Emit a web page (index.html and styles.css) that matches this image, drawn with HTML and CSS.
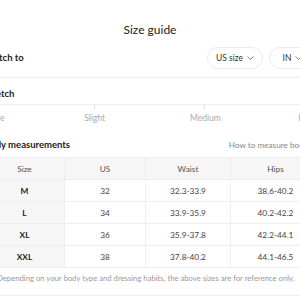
FILE: index.html
```html
<!DOCTYPE html>
<html lang="en">
<head>
    <meta charset="UTF-8">
    <meta name="viewport" content="width=device-width, initial-scale=1.0">
    <title>Size guide</title>
    <link rel="stylesheet" href="styles.css">
</head>
<body>
    <div class="modal">
        <h1 class="title">Size guide</h1>

        <div class="switch-row">
            <span class="section-label">Switch to</span>
            <div class="pills">
                <button class="pill">US size <span class="chev"><svg width="7" height="4" viewBox="0 0 7 4"><path d="M0.5 0.5 L3.5 3.3 L6.5 0.5" fill="none" stroke="#777" stroke-width="0.9"/></svg></span></button>
                <button class="pill pill-unit">IN <span class="chev"><svg width="7" height="4" viewBox="0 0 7 4"><path d="M0.5 0.5 L3.5 3.3 L6.5 0.5" fill="none" stroke="#777" stroke-width="0.9"/></svg></span></button>
            </div>
        </div>

        <div class="section-label stretch-title">Stretch</div>
        <div class="slider">
            <div class="track">
                <span class="tick"></span>
                <span class="tick"></span>
            </div>
            <div class="slider-labels">
                <span class="lbl-first">None</span>
                <span class="lbl-mid">Slight</span>
                <span class="lbl-mid">Medium</span>
                <span class="lbl-last">High</span>
            </div>
        </div>

        <div class="measure-head">
            <span class="section-label">Body measurements</span>
            <a class="how-link">How to measure body <svg width="4" height="7" viewBox="0 0 4 7"><path d="M0.5 0.5 L3.3 3.5 L0.5 6.5" fill="none" stroke="#999" stroke-width="0.9"/></svg></a>
        </div>

        <table class="size-table">
            <thead>
                <tr>
                    <th class="col-size">Size</th>
                    <th class="col-us">US</th>
                    <th class="col-waist">Waist</th>
                    <th class="col-hips">Hips</th>
                </tr>
            </thead>
            <tbody>
                <tr><td class="size-cell">M</td><td>32</td><td>32.3-33.9</td><td>38.6-40.2</td></tr>
                <tr><td class="size-cell">L</td><td>34</td><td>33.9-35.9</td><td>40.2-42.2</td></tr>
                <tr><td class="size-cell">XL</td><td>36</td><td>35.9-37.8</td><td>42.2-44.1</td></tr>
                <tr><td class="size-cell">XXL</td><td>38</td><td>37.8-40.2</td><td>44.1-46.5</td></tr>
            </tbody>
        </table>

        <p class="note">Depending on your body type and dressing habits, the above sizes are for reference only.</p>
    </div>
</body>
</html>
```

FILE: styles.css
```css
body {
    margin: 0;
    font-family: 'Lato', 'Noto Sans', sans-serif;
    color: #222;
    background-color: #fff;
    overflow: hidden;
}

.modal {
    width: 332px;
    margin-left: -16px;
    padding-top: 20px;
}

.title {
    margin: 0;
    font-size: 12px;
    font-weight: 400;
    line-height: 20px;
    text-align: center;
    color: #222;
}

.switch-row {
    display: flex;
    justify-content: space-between;
    align-items: center;
    margin-top: 7px;
    padding-bottom: 8px;
    border-bottom: 1px solid #f0f0f0;
}

.section-label {
    font-size: 9.5px;
    font-weight: 700;
    line-height: 16px;
    color: #222;
}

.pills {
    display: flex;
    gap: 6px;
}

.pill {
    display: flex;
    align-items: center;
    justify-content: center;
    gap: 4px;
    width: 56px;
    height: 22px;
    padding: 0;
    background-color: #fff;
    border: 1px solid #ebebeb;
    border-radius: 11px;
    font-family: inherit;
    font-size: 8.5px;
    color: #333;
}

.pill-unit {
    width: 47px;
}

.chev {
    display: flex;
}

.stretch-title {
    margin-top: 8px;
}

.slider {
    margin-top: 2px;
}

.track {
    display: grid;
    grid-template-columns: 1fr 1fr 1fr;
    height: 4px;
    border-top: 1px solid #eee;
}

.tick {
    border-right: 1px solid #ddd;
}

.slider-labels {
    display: grid;
    grid-template-columns: repeat(6, 1fr);
    margin-top: 2px;
    font-size: 8.5px;
    line-height: 14px;
    color: #aaa;
}

.lbl-mid {
    grid-column: span 2;
    text-align: center;
}

.lbl-last {
    text-align: right;
}

.measure-head {
    display: flex;
    justify-content: space-between;
    align-items: center;
    margin-top: 12px;
}

.how-link {
    display: flex;
    align-items: center;
    gap: 4px;
    font-size: 8.2px;
    color: #888;
}

.size-table {
    width: 332px;
    margin-top: 4px;
    border-collapse: collapse;
    table-layout: fixed;
    font-size: 8.3px;
    color: #444;
}

.size-table th,
.size-table td {
    height: 21px;
    padding: 0;
    border: 1px solid #efefef;
    text-align: center;
    font-weight: 400;
}

.size-table th {
    background-color: #f6f6f6;
    color: #555;
}

.col-size { width: 79px; }
.col-us { width: 80px; }
.col-waist { width: 84px; }
.col-hips { width: 89px; }

.size-table .size-cell {
    background-color: #f6f6f6;
    font-weight: 700;
    color: #222;
}

.note {
    margin: 3px 0 0 13px;
    padding-bottom: 10px;
    border-bottom: 1px solid #eee;
    font-size: 7.7px;
    line-height: 14px;
    color: #999;
    white-space: nowrap;
}
```
